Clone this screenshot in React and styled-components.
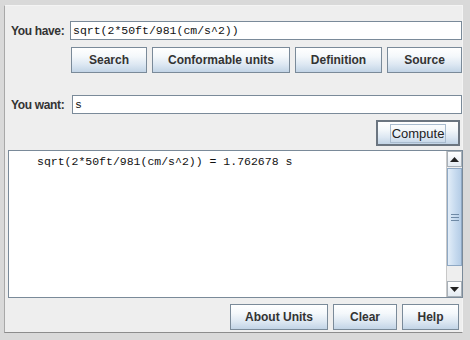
import React from "react";
import styled, { createGlobalStyle } from "styled-components";

const GlobalStyle = createGlobalStyle`
  html, body {
    margin: 0;
    padding: 0;
    background: #d9d9d9;
  }
  body {
    font-family: "Liberation Sans", Arial, sans-serif;
    width: 470px;
    height: 340px;
    overflow: hidden;
  }
`;

const Panel = styled.div`
  box-sizing: border-box;
  margin: 5px 0 0 4px;
  width: 459px;
  height: 328px;
  background: #eeeeee;
  border-left: 1px solid #a8a8a8;
  border-bottom: 1px solid #8c8c8c;
  border-top: 1px solid #f4f4f4;
  border-right: 1px solid #f4f4f4;
  display: flex;
  flex-direction: column;
  padding: 15px 0 0 3px;
`;

const FieldRow = styled.div`
  display: flex;
  align-items: center;
  height: 19px;
  margin-top: ${(p) => p.$top || 0}px;
`;

const Label = styled.span`
  font-weight: bold;
  font-size: 12px;
  letter-spacing: -0.35px;
  color: #333333;
  width: ${(p) => p.$w}px;
  padding-left: 3px;
  flex-shrink: 0;
  white-space: nowrap;
`;

const TextField = styled.div`
  box-sizing: border-box;
  flex: 1;
  height: 19px;
  background: #ffffff;
  border: 1px solid #7a8a99;
  font-family: "Liberation Mono", "Courier New", monospace;
  font-size: 11.5px;
  line-height: 17px;
  padding-left: 2px;
  color: #111111;
  white-space: pre;
`;

const ButtonRow = styled.div`
  display: flex;
  gap: 5px;
  margin-top: ${(p) => p.$top}px;
  justify-content: ${(p) => (p.$end ? "flex-end" : "flex-start")};
  padding-left: ${(p) => p.$left || 0}px;
  padding-right: ${(p) => p.$right || 0}px;
`;

const Button = styled.div`
  box-sizing: border-box;
  height: 26px;
  width: ${(p) => p.$w}px;
  border: ${(p) => (p.$default ? "2px solid #6b7580" : "1px solid #7a8a99")};
  background: linear-gradient(
    to bottom,
    #ffffff 0%,
    #f4f8fb 35%,
    #dce7f2 70%,
    #c2d4e6 100%
  );
  display: flex;
  align-items: center;
  justify-content: center;
  font-size: 12px;
  font-weight: ${(p) => (p.$default ? "normal" : "bold")};
  color: #333333;
`;

const Focus = styled.span`
  border: 1px solid #a9bccf;
  padding: 0 1px;
  line-height: 17px;
  font-size: 13px;
  color: #222222;
`;

const Output = styled.div`
  box-sizing: border-box;
  margin: 4px 0 0 0;
  width: 455px;
  height: 148px;
  background: #ffffff;
  border: 1px solid #7a8a99;
  display: flex;
`;

const OutputText = styled.div`
  flex: 1;
  font-family: "Liberation Mono", "Courier New", monospace;
  font-size: 11.5px;
  color: #111111;
  padding: 4px 0 0 28px;
  white-space: pre;
`;

const ScrollBar = styled.div`
  width: 15px;
  background: #eeeeee;
  border-left: 1px solid #c8c8c8;
  display: flex;
  flex-direction: column;
`;

const Arrow = styled.div`
  box-sizing: border-box;
  height: 16px;
  border: 1px solid #a8b0b8;
  background: linear-gradient(to bottom, #ffffff, #e4ebf2);
  display: flex;
  align-items: center;
  justify-content: center;
`;

const Thumb = styled.div`
  box-sizing: border-box;
  height: 98px;
  margin-top: 1px;
  border: 1px solid #8ea8c4;
  background: linear-gradient(to right, #e2edf8, #c5d9ee 60%, #b5cde6);
  display: flex;
  flex-direction: column;
  align-items: center;
  justify-content: center;
  gap: 2px;
`;

const Grip = styled.div`
  width: 8px;
  height: 1px;
  background: #6f8aa6;
`;

const Track = styled.div`
  flex: 1;
`;

const Tri = ({ up }) => (
  <svg width="9" height="5" viewBox="0 0 9 5">
    <polygon points={up ? "0,5 9,5 4.5,0" : "0,0 9,0 4.5,5"} fill="#222" />
  </svg>
);

export default function App() {
  return (
    <>
      <GlobalStyle />
      <Panel>
        <FieldRow>
          <Label $w={59}>You have:</Label>
          <TextField>sqrt(2*50ft/981(cm/s^2))</TextField>
        </FieldRow>
        <ButtonRow $top={7} $left={63}>
          <Button $w={76}>Search</Button>
          <Button $w={138}>Conformable units</Button>
          <Button $w={87}>Definition</Button>
          <Button $w={75}>Source</Button>
        </ButtonRow>
        <FieldRow $top={22}>
          <Label $w={61}>You want:</Label>
          <TextField>s</TextField>
        </FieldRow>
        <ButtonRow $top={6} $end $right={2}>
          <Button $w={84} $default>
            <Focus>Compute</Focus>
          </Button>
        </ButtonRow>
        <Output>
          <OutputText>sqrt(2*50ft/981(cm/s^2)) = 1.762678 s</OutputText>
          <ScrollBar>
            <Arrow>
              <Tri up />
            </Arrow>
            <Thumb>
              <Grip />
              <Grip />
              <Grip />
            </Thumb>
            <Track />
            <Arrow>
              <Tri />
            </Arrow>
          </ScrollBar>
        </Output>
        <ButtonRow $top={6} $end $right={3}>
          <Button $w={98}>About Units</Button>
          <Button $w={64}>Clear</Button>
          <Button $w={57}>Help</Button>
        </ButtonRow>
      </Panel>
    </>
  );
}
